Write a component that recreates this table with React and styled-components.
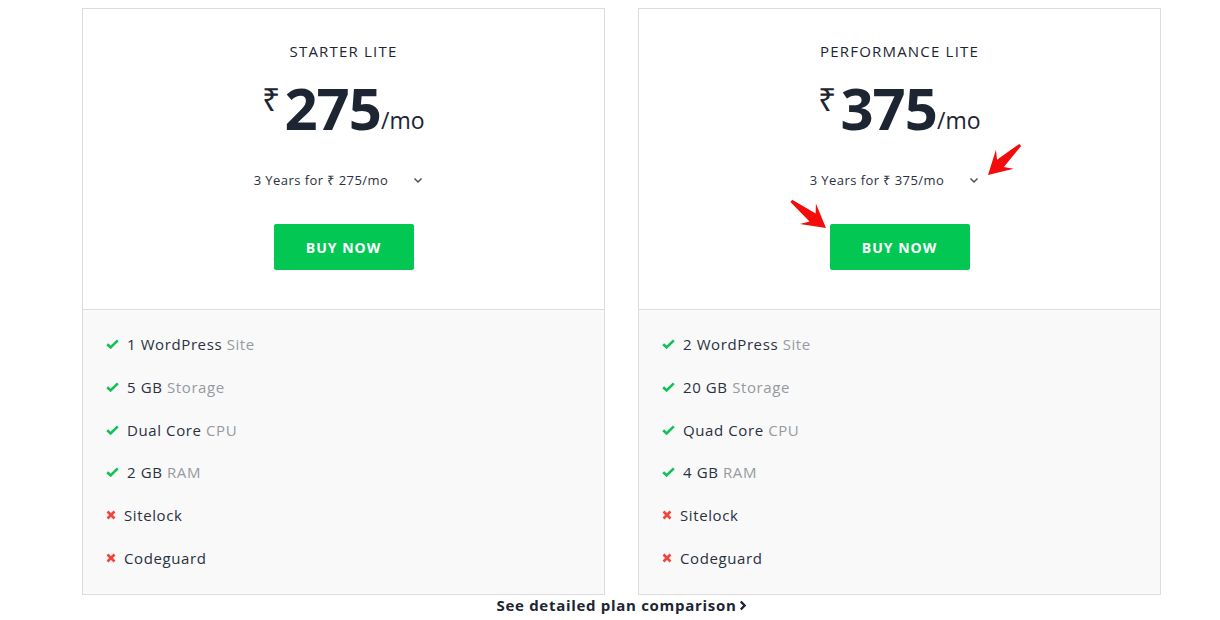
import React from "react"
import styled, { createGlobalStyle } from "styled-components"

const GlobalStyle = createGlobalStyle`
  body {
    margin: 0;
    background: #ffffff;
    font-family: "Open Sans", "Liberation Sans", sans-serif;
    color: #1d2532;
  }
`

const plans = [
  {
    name: "STARTER LITE",
    price: "275",
    features: [
      { on: true, main: "1 WordPress", sub: "Site" },
      { on: true, main: "5 GB", sub: "Storage" },
      { on: true, main: "Dual Core", sub: "CPU" },
      { on: true, main: "2 GB", sub: "RAM" },
      { on: false, main: "Sitelock" },
      { on: false, main: "Codeguard" },
    ],
  },
  {
    name: "PERFORMANCE LITE",
    price: "375",
    features: [
      { on: true, main: "2 WordPress", sub: "Site" },
      { on: true, main: "20 GB", sub: "Storage" },
      { on: true, main: "Quad Core", sub: "CPU" },
      { on: true, main: "4 GB", sub: "RAM" },
      { on: false, main: "Sitelock" },
      { on: false, main: "Codeguard" },
    ],
  },
]

// red annotation arrows drawn over the screenshot (tip x, tip y, angle)
const marks = [
  { x: 988, y: 175, angle: 137 },
  { x: 826, y: 228, angle: 38 },
]

const Check = () => (
  <svg width="13" height="10" viewBox="0 0 13 10">
    <path d="M1.2 5.2 L4.6 8.4 L11.8 1.4" fill="none" stroke="#10c255" strokeWidth="2.6" />
  </svg>
)

const Cross = () => (
  <svg width="10" height="10" viewBox="0 0 10 10">
    <path d="M1.5 1.5 L8.5 8.5 M8.5 1.5 L1.5 8.5" fill="none" stroke="#f2443a" strokeWidth="2.6" />
  </svg>
)

const Chevron = () => (
  <svg width="10" height="7" viewBox="0 0 10 7">
    <path d="M1.5 1.5 L5 5 L8.5 1.5" fill="none" stroke="#4a4f57" strokeWidth="1.5" />
  </svg>
)

const App = () => {
  return (
    <>
      <GlobalStyle />
      <Page>
        <Cards>
          {plans.map((p) => (
            <Card key={p.name}>
              <Top>
                <PlanName>{p.name}</PlanName>
                <PriceRow>
                  <Rupee>₹</Rupee>
                  <Amount>{p.price}</Amount>
                  <Per>/mo</Per>
                </PriceRow>
                <TermSelect>
                  <span>3 Years for ₹ {p.price}/mo</span>
                  <Chevron />
                </TermSelect>
                <BuyButton>BUY NOW</BuyButton>
              </Top>
              <Features>
                {p.features.map((f) => (
                  <Feature key={f.main}>
                    {f.on ? <Check /> : <Cross />}
                    <span>
                      {f.main}
                      {f.sub && <Muted> {f.sub}</Muted>}
                    </span>
                  </Feature>
                ))}
              </Features>
            </Card>
          ))}
        </Cards>
        <Compare>
          See detailed plan comparison
          <svg width="8" height="11" viewBox="0 0 8 11">
            <path d="M1.8 1.5 L5.6 5.5 L1.8 9.5" fill="none" stroke="#1d2532" strokeWidth="2.4" />
          </svg>
        </Compare>
        <Annotations width="1220" height="620">
          {marks.map((m, i) => (
            <g key={i} transform={`translate(${m.x} ${m.y}) rotate(${m.angle})`}>
              <path
                d="M0 0 L-23 -13 L-17 -5 L-44 -1.4 L-44 1.4 L-17 5 L-23 13 Z"
                fill="#f40b0b"
              />
            </g>
          ))}
        </Annotations>
      </Page>
    </>
  )
}

const Page = styled.div`
  position: relative;
  padding: 8px 0 0 82px;
  width: 1080px;
`

const Annotations = styled.svg`
  position: absolute;
  top: 0;
  left: 0;
  pointer-events: none;
`

const Cards = styled.div`
  display: flex;
  gap: 33px;
`

const Card = styled.div`
  width: 521px;
  border: 1px solid #dcdcdc;
  display: flex;
  flex-direction: column;
`

const Top = styled.div`
  height: 301px;
  background: #ffffff;
  border-bottom: 1px solid #dcdcdc;
  display: flex;
  flex-direction: column;
  align-items: center;
  box-sizing: border-box;
  padding-top: 32px;
`

const PlanName = styled.div`
  font-size: 15px;
  line-height: 20px;
  letter-spacing: 1.2px;
  color: #1d2532;
`

const PriceRow = styled.div`
  display: flex;
  align-items: flex-start;
  margin-top: 16px;
  height: 62px;
  color: #1d2532;
`

const Rupee = styled.span`
  font-size: 32px;
  line-height: 1;
  margin-top: 6px;
  margin-right: 4px;
  font-weight: 300;
`

const Amount = styled.span`
  font-size: 58px;
  line-height: 62px;
  font-weight: 700;
  letter-spacing: -1px;
`

const Per = styled.span`
  font-size: 23px;
  line-height: 1;
  margin-top: 32px;
  font-weight: 400;
`

const TermSelect = styled.div`
  margin-top: 32px;
  display: flex;
  align-items: center;
  gap: 25px;
  font-size: 13px;
  line-height: 18px;
  letter-spacing: 0.45px;
  color: #2a3140;
  padding-right: 10px;
`

const BuyButton = styled.button`
  margin-top: 35px;
  width: 140px;
  height: 46px;
  border: none;
  border-radius: 2px;
  background: #02c853;
  color: #ffffff;
  font-family: "Open Sans", "Liberation Sans", sans-serif;
  font-weight: 700;
  font-size: 14px;
  letter-spacing: 1px;
`

const Features = styled.div`
  background: #f9f9f9;
  height: 284px;
  box-sizing: border-box;
  padding: 23px 0 0 23px;
  display: flex;
  flex-direction: column;
  gap: 20.8px;
`

const Feature = styled.div`
  display: flex;
  align-items: center;
  gap: 8px;
  font-size: 15px;
  line-height: 22px;
  letter-spacing: 0.6px;
  color: #2a3140;
`

const Muted = styled.span`
  color: #969aa0;
`

const Compare = styled.div`
  display: flex;
  align-items: center;
  justify-content: center;
  gap: 3px;
  margin-top: 1px;
  font-size: 15px;
  font-weight: 700;
  line-height: 18px;
  letter-spacing: 0.7px;
  color: #1d2532;
`

export default App
